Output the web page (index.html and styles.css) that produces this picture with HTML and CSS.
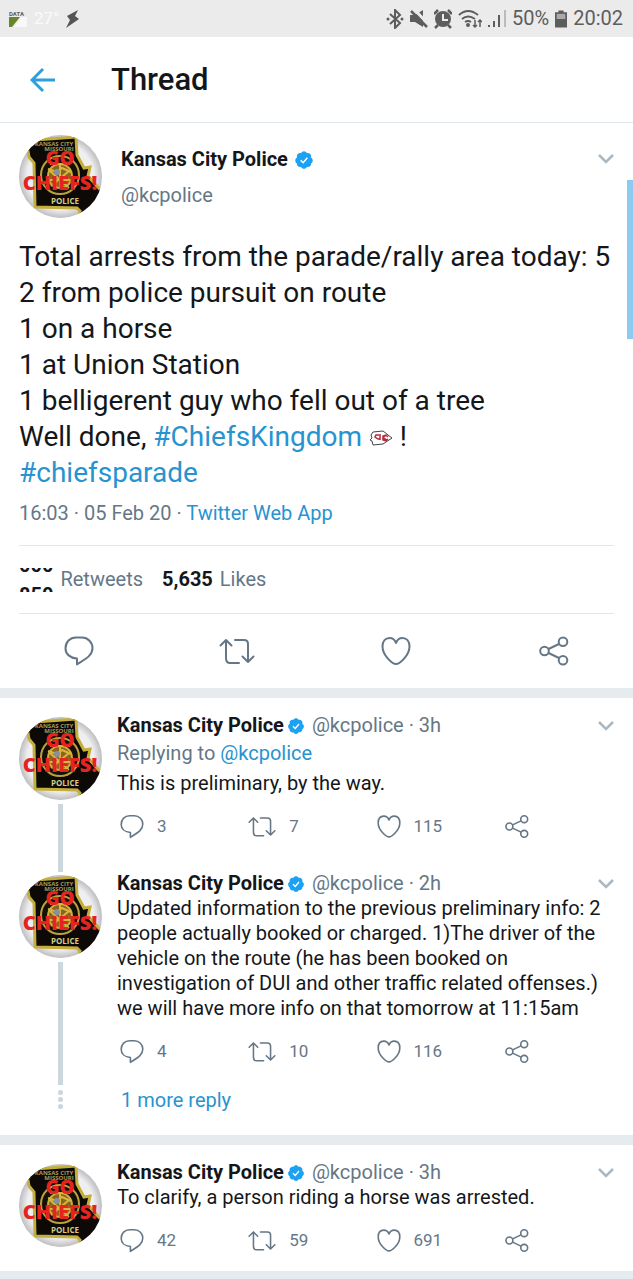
FILE: index.html
```html
<!DOCTYPE html>
<html lang="en">
<head>
  <meta charset="UTF-8" />
  <meta name="viewport" content="width=device-width, initial-scale=1.0"/>
  <title>Thread</title>
  <link rel="stylesheet" href="styles.css">
</head>
<body>
  <!-- Shared icons -->
  <svg class="sprite" aria-hidden="true">
    <symbol id="avatar" viewBox="0 0 83 83">
      <clipPath id="round"><circle cx="41.500" cy="41.500" r="41.500"/></clipPath>
      <radialGradient id="shade">
        <stop offset="0.800" stop-color="#efeef0"/>
        <stop offset="1" stop-color="#bebdbf"/>
      </radialGradient>
      <g clip-path="url(#round)">
        <rect width="83" height="83" fill="url(#shade)"/>
        <path d="M2 6 L9 16 L10 22 L15 28 L16 72 L58 73 L61 76 L59 86 L88 86 L88 62 L77 50 L69 41 L71 32 L65 33 L58 20 L57 2 Z" fill="#0c0907" stroke="#c4ae3c" stroke-width="3"/>
        <circle cx="41" cy="40" r="19" fill="#15100a" stroke="#b9a03c" stroke-width="2"/>
        <circle cx="41" cy="41" r="12" fill="#8b651f" stroke="#d0ae3c" stroke-width="2"/>
        <path d="M31 29 h20 M29 34 l9 3 5-4 9 4 M32 51 l18-15 M31 36 l19 17 M30 45 h22 M41 29 v24" fill="none" stroke="#d6b63e" stroke-width="2"/>
        <circle cx="38" cy="37" r="3" fill="#8491a5"/>
        <text x="35" y="11" class="seal-top">KANSAS CITY</text>
        <text x="40" y="16" class="seal-top">MISSOURI</text>
        <text x="41" y="30" class="seal-go">GO</text>
        <text x="41" y="55" class="seal-chiefs">CHIEFS!</text>
        <text x="46" y="69" class="seal-police">POLICE</text>
      </g>
    </symbol>
    <symbol id="verified" viewBox="0 0 24 24">
      <path d="M22.500 12.500c0-1.580-.875-2.950-2.148-3.600.154-.435.238-.905.238-1.400 0-2.210-1.710-3.998-3.818-3.998-.47 0-.92.084-1.336.25C14.818 2.415 13.510 1.500 12 1.500s-2.816.917-3.437 2.250c-.415-.165-.866-.25-1.336-.25-2.110 0-3.818 1.790-3.818 4 0 .494.083.964.237 1.400-1.272.65-2.147 2.018-2.147 3.600 0 1.495.782 2.798 1.942 3.486-.02.17-.032.340-.032.514 0 2.210 1.708 4 3.818 4 .47 0 .92-.086 1.335-.25.620 1.334 1.926 2.250 3.437 2.250 1.512 0 2.818-.916 3.437-2.250.415.163.865.248 1.336.248 2.110 0 3.818-1.790 3.818-4 0-.174-.012-.344-.033-.513 1.158-.687 1.943-1.990 1.943-3.484z" fill="#1da1f2"/>
      <path d="M8 12.300l3 3 5-6" fill="none" stroke="#fff" stroke-width="1.800"/>
    </symbol>
    <symbol id="chevron" viewBox="0 0 16 12">
      <path d="M1 2l7 7 7-7" fill="none" stroke="#aab8c2" stroke-width="2.500"/>
    </symbol>
    <symbol id="comment" viewBox="0 0 30 30">
      <path d="M13 22.500C6 22 1.500 18 1.500 12.500 1.500 6 6 1.500 12 1.500h6c6 0 10.500 5 10.500 10.500 0 8-8 11.500-15.500 16.500z" fill="none" stroke="currentColor" stroke-width="2" stroke-linejoin="round"/>
    </symbol>
    <symbol id="retweet" viewBox="0 0 36 30">
      <path d="M1.500 9.500L7 4l5.500 5.500M7 4v18q0 5 4 5h9M34.500 20.500L29 26l-5.500-5.500M29 26V8q0-4-4-4h-9" fill="none" stroke="currentColor" stroke-width="2" stroke-linecap="round" stroke-linejoin="round"/>
    </symbol>
    <symbol id="like" viewBox="0 0 30 30">
      <path d="M15 28C12 28 1.500 20 1.500 10.500 1.500 5 4.500 2 8.500 2c3 0 5.500 2 6.500 5 1-3 3.500-5 6.500-5 4 0 7 3 7 8.500C28.500 20 18 28 15 28z" fill="none" stroke="currentColor" stroke-width="2" stroke-linejoin="round"/>
    </symbol>
    <symbol id="share" viewBox="0 0 30 30">
      <g fill="none" stroke="currentColor" stroke-width="2">
        <circle cx="5.500" cy="15" r="4.300"/>
        <circle cx="24" cy="5.800" r="4.300"/>
        <circle cx="24" cy="24.200" r="4.300"/>
        <path d="M9.500 13l10.500-5M9.500 17l10.500 5"/>
      </g>
    </symbol>
  </svg>

  <div class="status-bar">
    <div class="status-left">
      <div class="data">
        <span class="data-label">DATA</span>
        <svg width="18" height="10" viewBox="0 0 18 10"><path d="M0 0h11L3 10H0z" fill="#688528"/><path d="M12 0h6v10H5z" fill="#f8f8f8"/></svg>
      </div>
      <span class="temp">27°</span>
      <svg width="14" height="18" viewBox="0 0 14 18"><path d="M12 0L1 6l3 4-4 8 13-9-4-3z" fill="#555"/></svg>
    </div>
    <div class="status-right">
      <svg width="18" height="20" viewBox="0 0 18 20"><path d="M4 5l10 9-5 5V1l5 5-10 9" fill="none" stroke="#5d5d5d" stroke-width="2"/><circle cx="2" cy="10" r="1.500" fill="#5d5d5d"/><circle cx="16" cy="10" r="1.500" fill="#5d5d5d"/></svg>
      <svg width="18" height="20" viewBox="0 0 18 20"><path d="M0 6h5l8-5v17l-8-5H0z" fill="#5d5d5d"/><path d="M4 0l14 15" stroke="#ebebeb" stroke-width="3"/><path d="M1 2l16 16" stroke="#5d5d5d" stroke-width="2.500"/></svg>
      <svg width="18" height="20" viewBox="0 0 18 20"><circle cx="9" cy="10" r="8" fill="#5d5d5d"/><path d="M0 5l4-4M18 5l-4-4M4 16l-3 3M14 16l3 3" stroke="#5d5d5d" stroke-width="2.500"/><path d="M9 5v6h5" fill="none" stroke="#ebebeb" stroke-width="2"/></svg>
      <svg width="24" height="20" viewBox="0 0 24 20"><g fill="none" stroke="#5d5d5d" stroke-width="2"><path d="M1 6Q10-2 20 6M4 10q6-5 13 0M7 13q3-2 6 0"/></g><circle cx="10" cy="16" r="2" fill="#5d5d5d"/><path d="M17 11v7M15 16l2 2 2-2M22 18v-7M20 13l2-2 2 2" fill="none" stroke="#5d5d5d" stroke-width="1.500"/></svg>
      <svg width="18" height="20" viewBox="0 0 18 20"><path d="M1 16v2M6 12v6M11 6v12" stroke="#5d5d5d" stroke-width="2"/><path d="M17 1v17" stroke="#bbb" stroke-width="2"/></svg>
      <span>50%</span>
      <svg width="12" height="18" viewBox="0 0 14 20"><path d="M4 0h6v2h4v18H0V2h4z" fill="#5d5d5d"/><path d="M2 4h10v6H2z" fill="#aaa"/></svg>
      <span>20:02</span>
    </div>
  </div>

  <header class="header">
    <a href="#" class="back" aria-label="Back">
      <svg width="26" height="26" viewBox="0 0 26 26"><path d="M25 13H2M13 2L2 13l11 11" fill="none" stroke="#2d9fdc" stroke-width="3"/></svg>
    </a>
    <h1 class="title">Thread</h1>
  </header>

  <main>
    <article class="tweet">
      <div class="scroll-thumb"></div>
      <div class="author">
        <svg class="avatar" role="img" aria-label="Kansas City Police"><use href="#avatar"/></svg>
        <div class="author-names">
          <div class="name-row"><strong class="name">Kansas City Police</strong><svg class="verified"><use href="#verified"/></svg></div>
          <span class="handle">@kcpolice</span>
        </div>
        <button class="more" aria-label="More"><svg><use href="#chevron"/></svg></button>
      </div>
      <p class="tweet-text">
        Total arrests from the parade/rally area today: 5<br>
        2 from police pursuit on route<br>
        1 on a horse<br>
        1 at Union Station<br>
        1 belligerent guy who fell out of a tree<br>
        Well done, <a href="#">#ChiefsKingdom</a>
        <svg class="arrowhead" viewBox="0 0 24 16"><path d="M2 5l2-3 10-1 9 7-9 6-10 1-1-4-2-1 2-2z" fill="#fff" stroke="#444" stroke-width="1"/><path d="M10 5H7l-1 2 3 2h2M11 4v6M17 5l-3 3 4 2M19 7l-2-2-3 1v4l3 1 2-2" fill="none" stroke="#b52a3c" stroke-width="1.500"/></svg> !<br>
        <a href="#">#chiefsparade</a>
      </p>
      <p class="meta">16:03 · 05 Feb 20 · <a href="#">Twitter Web App</a></p>
      <div class="stats">
        <!-- retweet counter, halfway through its roll -->
        <span class="rolling"><b>000</b><b>850</b></span>
        <span class="stat-label">Retweets</span>
        <b class="stat-count">5,635</b>
        <span>Likes</span>
      </div>
      <div class="actions">
        <button aria-label="Reply"><svg><use href="#comment"/></svg></button>
        <button aria-label="Retweet"><svg class="wide"><use href="#retweet"/></svg></button>
        <button aria-label="Like"><svg><use href="#like"/></svg></button>
        <button aria-label="Share"><svg><use href="#share"/></svg></button>
      </div>
    </article>

    <section class="conversation">
      <article class="reply has-reply">
        <div class="rail">
          <svg class="avatar" role="img" aria-label="Kansas City Police"><use href="#avatar"/></svg>
          <span class="line"></span>
        </div>
        <div class="reply-body">
          <div class="reply-head">
            <strong class="name">Kansas City Police</strong><svg class="verified"><use href="#verified"/></svg>
            <span class="handle">@kcpolice · 3h</span>
            <button class="more" aria-label="More"><svg><use href="#chevron"/></svg></button>
          </div>
          <p class="replying">Replying to <a href="#">@kcpolice</a></p>
          <p class="reply-text">This is preliminary, by the way.</p>
          <div class="reply-actions">
            <button aria-label="Reply"><svg><use href="#comment"/></svg>3</button>
            <button aria-label="Retweet"><svg class="wide"><use href="#retweet"/></svg>7</button>
            <button aria-label="Like"><svg><use href="#like"/></svg>115</button>
            <button aria-label="Share"><svg><use href="#share"/></svg></button>
          </div>
        </div>
      </article>

      <article class="reply has-more">
        <div class="rail">
          <svg class="avatar" role="img" aria-label="Kansas City Police"><use href="#avatar"/></svg>
          <span class="line"></span>
        </div>
        <div class="reply-body">
          <div class="reply-head">
            <strong class="name">Kansas City Police</strong><svg class="verified"><use href="#verified"/></svg>
            <span class="handle">@kcpolice · 2h</span>
            <button class="more" aria-label="More"><svg><use href="#chevron"/></svg></button>
          </div>
          <p class="reply-text">Updated information to the previous preliminary info: 2 people actually booked or charged. 1)The driver of the vehicle on the route (he has been booked on investigation of DUI and other traffic related offenses.) we will have more info on that tomorrow at 11:15am</p>
          <div class="reply-actions">
            <button aria-label="Reply"><svg><use href="#comment"/></svg>4</button>
            <button aria-label="Retweet"><svg class="wide"><use href="#retweet"/></svg>10</button>
            <button aria-label="Like"><svg><use href="#like"/></svg>116</button>
            <button aria-label="Share"><svg><use href="#share"/></svg></button>
          </div>
        </div>
      </article>

      <div class="more-replies">
        <span class="dots"><i></i><i></i><i></i></span>
        <a href="#">1 more reply</a>
      </div>
    </section>

    <section class="conversation">
      <article class="reply">
        <div class="rail">
          <svg class="avatar" role="img" aria-label="Kansas City Police"><use href="#avatar"/></svg>
        </div>
        <div class="reply-body">
          <div class="reply-head">
            <strong class="name">Kansas City Police</strong><svg class="verified"><use href="#verified"/></svg>
            <span class="handle">@kcpolice · 3h</span>
            <button class="more" aria-label="More"><svg><use href="#chevron"/></svg></button>
          </div>
          <p class="reply-text">To clarify, a person riding a horse was arrested.</p>
          <div class="reply-actions">
            <button aria-label="Reply"><svg><use href="#comment"/></svg>42</button>
            <button aria-label="Retweet"><svg class="wide"><use href="#retweet"/></svg>59</button>
            <button aria-label="Like"><svg><use href="#like"/></svg>691</button>
            <button aria-label="Share"><svg><use href="#share"/></svg></button>
          </div>
        </div>
      </article>
    </section>
  </main>
</body>
</html>
```
FILE: styles.css
```css
* {
  box-sizing: border-box;
}

body {
  margin: 0;
  background-color: #e6ebef;
  color: #14171a;
  font-family: Roboto, "Liberation Sans", sans-serif;
  font-size: 20px;
  line-height: 25px;
}

a {
  color: #2793cf;
  text-decoration: none;
}

p {
  margin: 0;
}

svg {
  display: block;
  flex-shrink: 0;
}

button {
  border: 0;
  padding: 0;
  background: none;
  color: #657786;
  font: inherit;
  cursor: pointer;
}

.sprite {
  position: absolute;
  width: 0;
  height: 0;
}

/* Status bar */
.status-bar {
  display: flex;
  justify-content: space-between;
  align-items: center;
  height: 37px;
  padding: 0 10px 0 9px;
  background-color: #ebebeb;
  color: #5d5d5d;
}

.status-left,
.status-right {
  display: flex;
  align-items: center;
}

.status-left {
  gap: 7px;
}

.status-right {
  gap: 6px;
}

.data-label {
  display: block;
  font-size: 6px;
  font-weight: 700;
  line-height: 7px;
}

.temp {
  color: #fafafa;
  font-size: 17px;
}

/* Header */
.header {
  display: flex;
  align-items: center;
  gap: 55px;
  height: 86px;
  padding: 0 30px;
  border-bottom: 1px solid #e1e8ed;
  background-color: #fff;
}

.title {
  margin: 0;
  font-size: 31px;
  font-weight: 500;
  line-height: 40px;
}

/* Main tweet */
.tweet {
  position: relative;
  background-color: #fff;
}

.scroll-thumb {
  position: absolute;
  top: 57px;
  right: 0;
  width: 6px;
  height: 159px;
  background-color: #8ccaf0;
}

.author {
  display: flex;
  gap: 19px;
  padding: 12px 19px 21px;
}

.avatar {
  width: 83px;
  height: 83px;
}

.seal-top,
.seal-go,
.seal-chiefs,
.seal-police {
  font-family: "Open Sans", sans-serif;
  font-weight: 700;
  text-anchor: middle;
}

.seal-top {
  fill: #a89a58;
  font-size: 6px;
}

.seal-go {
  fill: #e5231f;
  font-size: 19px;
  font-weight: 800;
}

.seal-chiefs {
  fill: #e5231f;
  font-size: 20px;
  font-weight: 800;
}

.seal-police {
  fill: #d6cb83;
  font-size: 8px;
}

.author-names {
  flex: 1;
  padding-top: 12px;
}

.name-row {
  display: flex;
  align-items: center;
  margin-bottom: 11px;
}

.name {
  font-weight: 700;
}

.verified {
  width: 20px;
  height: 20px;
  margin-left: 6px;
}

.handle {
  color: #657786;
}

.more svg {
  width: 16px;
  height: 12px;
}

.author .more {
  align-self: flex-start;
  margin-top: 18px;
}

.tweet-text {
  padding: 0 19px;
  font-size: 28px;
  line-height: 36px;
}

.arrowhead {
  display: inline-block;
  width: 24px;
  height: 16px;
}

.meta {
  padding: 10px 19px 19px;
  color: #657786;
}

.stats {
  display: flex;
  align-items: center;
  height: 69px;
  margin: 0 19px;
  border-top: 1px solid #e1e8ed;
  border-bottom: 1px solid #e1e8ed;
  color: #657786;
}

.rolling {
  display: flex;
  flex-direction: column;
  justify-content: center;
  height: 24px;
  margin-right: 7px;
  overflow: hidden;
  color: #14171a;
  line-height: 30px;
}

.stat-label {
  margin-right: 19px;
}

.stat-count {
  margin-right: 7px;
  color: #14171a;
}

.actions {
  display: grid;
  grid-template-columns: repeat(4, 1fr);
  justify-items: center;
  padding: 22px 0;
}

.actions svg {
  width: 30px;
  height: 30px;
}

.actions .wide {
  width: 36px;
}

/* Replies */
.conversation {
  margin-top: 10px;
  background-color: #fff;
}

.reply {
  display: flex;
  gap: 15px;
  padding-left: 19px;
}

.conversation .reply:first-child {
  padding-top: 19px;
}

.rail {
  display: flex;
  flex-direction: column;
  align-items: center;
  gap: 4px;
}

.line {
  flex: 1;
  width: 5px;
  margin-bottom: 3px;
  background-color: #ccd6dd;
}

.reply-body {
  flex: 1;
  padding-bottom: 18px;
}

.has-reply .reply-body {
  padding-bottom: 36px;
}

.has-more .reply-body {
  padding-bottom: 24px;
}

.reply-head {
  display: flex;
  align-items: center;
  margin-top: -4px;
  padding-right: 19px;
}

.reply-head .verified {
  width: 18px;
  height: 18px;
  margin: 0 7px 0 3px;
}

.reply-head .more {
  margin-left: auto;
}

.replying {
  padding: 3px 0 5px;
  color: #657786;
}

.reply-text {
  padding-right: 19px;
}

.reply-actions {
  display: grid;
  grid-template-columns: repeat(4, 1fr);
  padding: 18px 0 0 3px;
}

.reply-actions button {
  display: flex;
  align-items: center;
  gap: 13px;
  font-size: 17px;
}

.reply-actions svg {
  width: 24px;
  height: 25px;
}

.reply-actions .wide {
  width: 28px;
}

.more-replies {
  display: flex;
  gap: 58px;
  padding: 0 58px 22px;
}

.dots {
  display: flex;
  flex-direction: column;
  gap: 2px;
  padding-top: 2px;
}

.dots i {
  width: 5px;
  height: 5px;
  border-radius: 50%;
  background-color: #ccd6dd;
}
```
